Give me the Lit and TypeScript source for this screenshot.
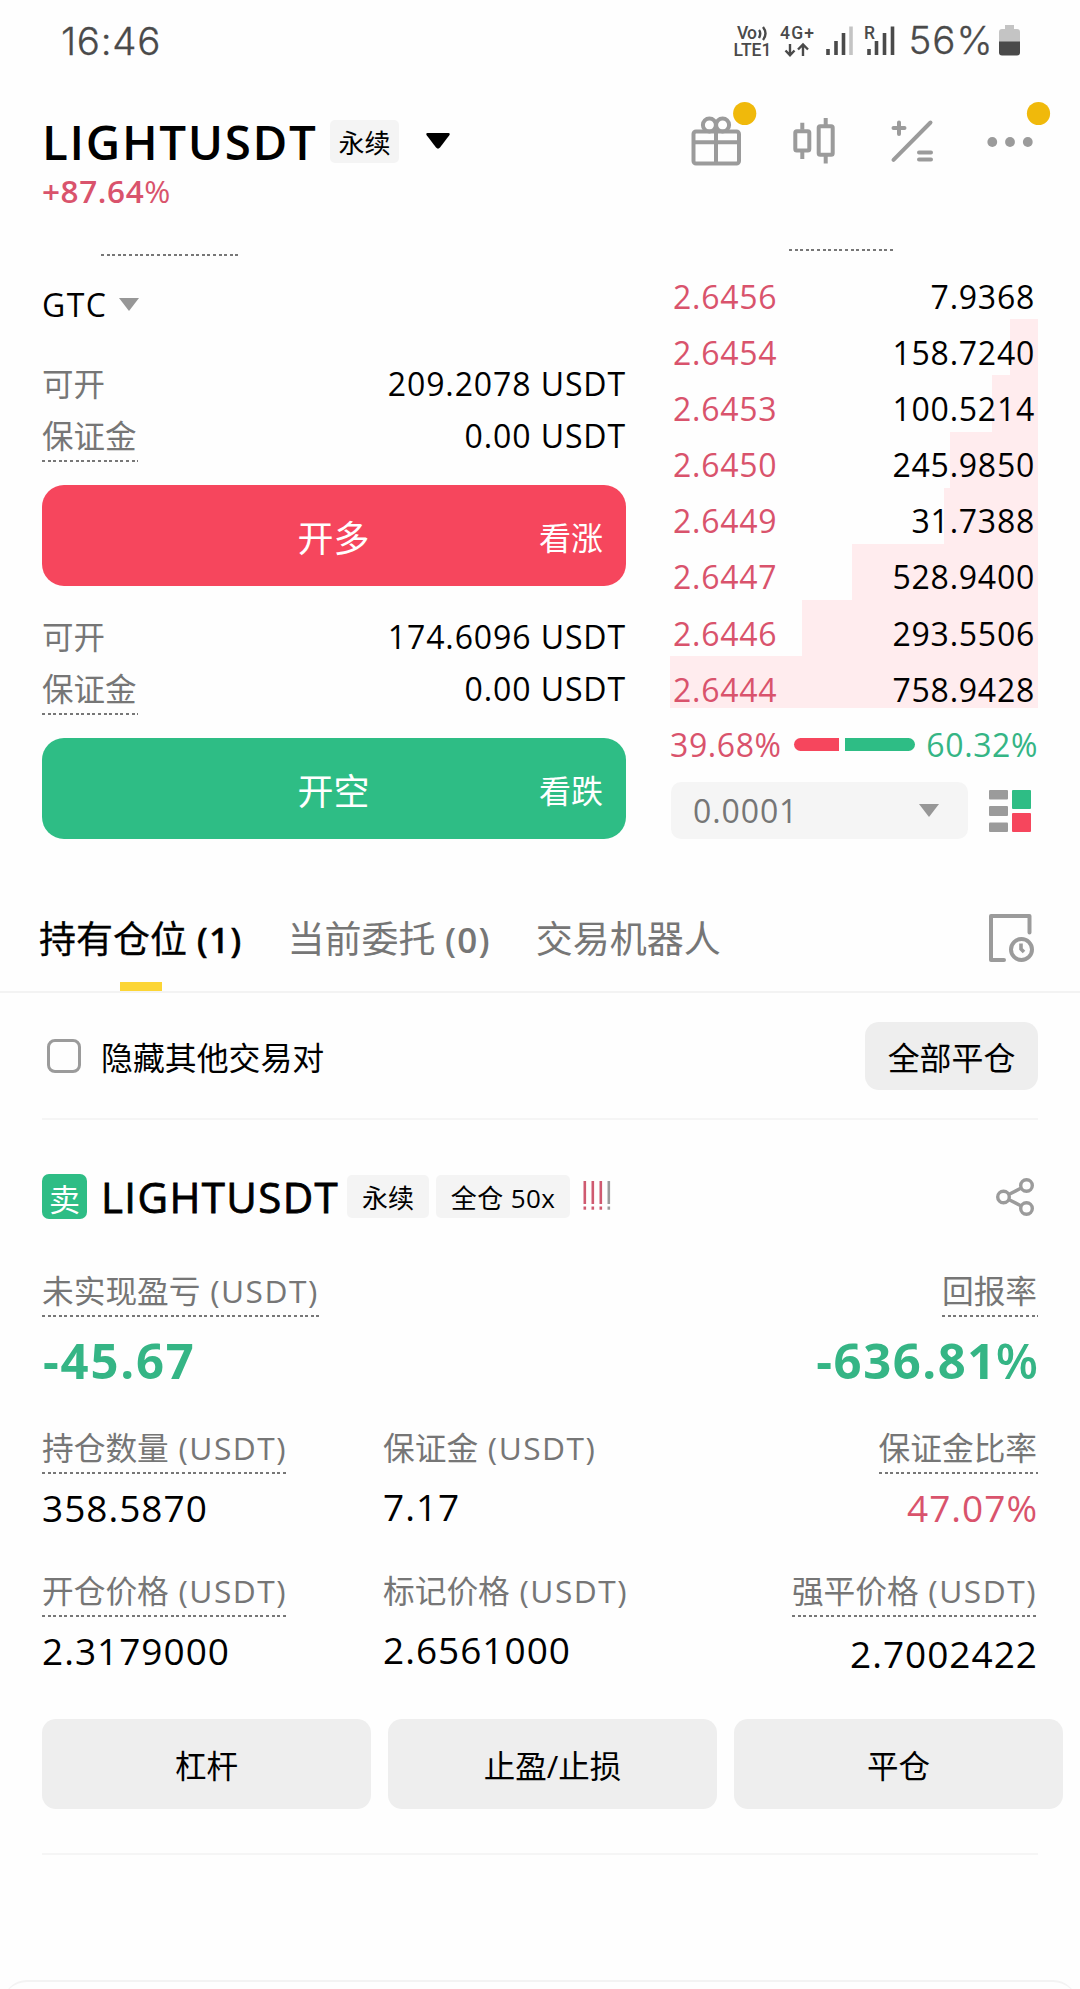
import { LitElement, html, css, svg, nothing } from "lit";
import { customElement, property } from "lit/decorators.js";

interface BookRow {
  price: string;
  amount: string;
  depth: number;
}

const BOOK: BookRow[] = [
  { price: "2.6456", amount: "7.9368", depth: 0 },
  { price: "2.6454", amount: "158.7240", depth: 28 },
  { price: "2.6453", amount: "100.5214", depth: 46 },
  { price: "2.6450", amount: "245.9850", depth: 88 },
  { price: "2.6449", amount: "31.7388", depth: 94 },
  { price: "2.6447", amount: "528.9400", depth: 186 },
  { price: "2.6446", amount: "293.5506", depth: 236 },
  { price: "2.6444", amount: "758.9428", depth: 368 },
];

const shared = css`
  * {
    box-sizing: border-box;
  }
  svg {
    display: block;
    overflow: visible;
    flex: none;
  }
  .dash {
    background: repeating-linear-gradient(90deg, #777 0 3px, transparent 3px 5.6px) left bottom / 100% 2px no-repeat;
  }
`;

@customElement("status-bar")
class StatusBar extends LitElement {
  static styles = [
    shared,
    css`
      :host {
        display: flex;
        align-items: center;
        justify-content: space-between;
        height: 82px;
        padding: 0 60px 0 61px;
        color: #4a4a4a;
        font: 300 38.5px/50px "Inter", sans-serif;
      }
      .time {
        letter-spacing: 0.7px;
        -webkit-text-stroke: 0.3px #4a4a4a;
      }
      .small {
        font: 500 17.5px "Roboto", sans-serif;
        fill: #4a4a4a;
      }
      .big {
        font: 300 38.5px "Inter", sans-serif;
        fill: #4a4a4a;
        stroke: #4a4a4a;
        stroke-width: 0.3px;
      }
    `,
  ];

  render() {
    return html`
      <span class="time">16:46</span>
      <svg width="287" height="34" viewBox="733 25 287 34" fill="none">
        <text class="small" x="737" y="40" textLength="20">Vo</text>
        <path d="M759 31q2.500 3 0 8M763 28q5 6.500 0 13" stroke="#4a4a4a" stroke-width="2.400" />
        <text class="small" x="733.500" y="57" textLength="38">LTE1</text>
        <text class="small" x="780" y="40" textLength="34">4G+</text>
        <path d="M790 45v11M785.500 51.500l4.500 4.800 4.500-4.800M803 57V46M798 50.500l5-5 5 5" stroke="#4a4a4a" stroke-width="2.400" />
        <path d="M828 50v6M836 42v14M843.500 34v22" stroke="#4a4a4a" stroke-width="3.600" />
        <path d="M851 27.500v28.500" stroke="#c4c4c4" stroke-width="3.600" />
        <text class="small" x="864" y="40">R</text>
        <path d="M869 50v6M876.500 42v14M884.500 34v22M892.500 27.500v28.500" stroke="#4a4a4a" stroke-width="3.600" />
        <text class="big" x="908.500" y="55" textLength="84">56%</text>
        <path d="M1005 26h9v4h3q3 0 3 3v10h-21V33q0-3 3-3h3z" fill="#c4c4c4" />
        <path d="M999 42.500h21V53.500q0 3-3 3h-15q-3 0-3-3z" fill="#4a4a4a" />
      </svg>
    `;
  }
}

@customElement("pair-header")
class PairHeader extends LitElement {
  static styles = [
    shared,
    css`
      :host {
        display: block;
        padding: 17px 42px 0 42px;
      }
      .row {
        display: flex;
        align-items: center;
        height: 84px;
      }
      .name {
        width: 288px;
        color: #000;
        font-size: 47.5px;
        font-weight: 600;
        line-height: 83px;
        letter-spacing: 1.7px;
        white-space: nowrap;
      }
      .tag {
        width: 69px;
        height: 43px;
        border-radius: 5px;
        background: #f4f4f4;
        color: #000;
        font-size: 26px;
        line-height: 46px;
        text-align: center;
      }
      .caret {
        margin-left: 27px;
      }
      .icons {
        margin-left: auto;
        margin-right: 5px;
      }
      .change {
        color: #d9536c;
        font-size: 31.5px;
        font-weight: 600;
        line-height: 16px;
        height: 17px;
        letter-spacing: 0.6px;
      }
      .pct {
        font-weight: 400;
      }
    `,
  ];

  render() {
    return html`
      <div class="row">
        <span class="name">LIGHTUSDT</span>
        <span class="tag">永续</span>
        <svg class="caret" width="24" height="16" viewBox="0 0 24 16">
          <path d="M1.500 0h21q2 .5.800 2.200L14 14.500q-2 2.300-4 0L.700 2.200Q-.500.500 1.500 0z" fill="#000" />
        </svg>
        <svg class="icons" width="342" height="50" viewBox="691 116 342 50" fill="none" stroke="#9b9b9b" stroke-width="4">
          <rect x="693.500" y="131.500" width="45.500" height="32" rx="2.500" />
          <path d="M693.500 142.300h45.500M716 124v39.500" />
          <circle cx="709.400" cy="125" r="6.500" />
          <circle cx="722.600" cy="125" r="6.500" />
          <rect x="795.300" y="131.200" width="14" height="19.200" rx="1.500" />
          <rect x="818.700" y="126.300" width="14" height="28.400" rx="1.500" />
          <path d="M802.300 122.800v7M802.300 152v7M825.700 118v7M825.700 156v7.500" />
          <g stroke-linecap="round">
            <path d="M893.500 159.800L930.500 122.500M893.500 128h11M899 122.500v11.500M919 152.500h12M919 159.500h12" />
          </g>
          <g stroke="none" fill="#9b9b9b">
            <circle cx="992.300" cy="142" r="4.900" />
            <circle cx="1010" cy="142" r="4.900" />
            <circle cx="1027.800" cy="142" r="4.900" />
          </g>
          <g stroke="none" fill="#f0b90b">
            <circle cx="744.700" cy="113.500" r="11.600" />
            <circle cx="1038.500" cy="113.500" r="11.600" />
          </g>
        </svg>
      </div>
      <div class="change">+87.64<span class="pct">%</span></div>
    `;
  }
}

@customElement("order-side")
class OrderSide extends LitElement {
  @property() max = "";
  @property() action = "";
  @property() hint = "";
  @property() tone = "red";

  static styles = [
    shared,
    css`
      :host {
        display: block;
      }
      .row {
        display: flex;
        justify-content: space-between;
        height: 63px;
        line-height: 61px;
        font-size: 31.5px;
        color: #000;
      }
      .row.margin {
        height: 46px;
        line-height: 40px;
      }
      .label {
        color: #767676;
        padding: 0 1px 0 0;
      }
      .value {
        font-size: 32px;
        letter-spacing: 0.9px;
      }
      .button {
        display: grid;
        grid-template-columns: 1fr auto 1fr;
        align-items: center;
        width: 584px;
        height: 101px;
        margin-top: 23px;
        padding: 1px 23px 0 22px;
        border-radius: 22px;
        color: #fff;
        font-size: 36px;
      }
      .red {
        background: #f6465d;
      }
      .green {
        background: #2ebd85;
      }
      .hint {
        grid-column: 3;
        justify-self: end;
        font-size: 32px;
      }
      .action {
        grid-column: 2;
      }
    `,
  ];

  render() {
    return html`
      <div class="row"><span class="label">可开</span><span class="value">${this.max} USDT</span></div>
      <div class="row margin"><span class="label dash">保证金</span><span class="value">0.00 USDT</span></div>
      <div class="button ${this.tone}">
        <span class="action">${this.action}</span><span class="hint">${this.hint}</span>
      </div>
    `;
  }
}

@customElement("order-book")
class OrderBook extends LitElement {
  static styles = [
    shared,
    css`
      :host {
        display: block;
        padding-top: 49px;
      }
      .rule {
        width: 105px;
        height: 2px;
        margin-left: 119px;
      }
      .rows {
        height: 445px;
        margin-top: 12px;
      }
      .row {
        display: flex;
        justify-content: space-between;
        height: 56.2px;
        padding: 11.5px 3px 0 3px;
        line-height: 43px;
        font-size: 32px;
        letter-spacing: 0.75px;
        background: linear-gradient(#ffecee, #ffecee) right top / var(--depth) 100% no-repeat;
        color: #000;
      }
      .row:last-child {
        height: 51.6px;
        line-height: 39px;
        padding-top: 13.5px;
      }
      .price {
        color: #d9536c;
      }
      .ratio {
        display: flex;
        align-items: center;
        height: 72px;
        margin-bottom: 2px;
        font-size: 32px;
        letter-spacing: 0.6px;
      }
      .buy {
        width: 124px;
        color: #d9536c;
      }
      .sell {
        margin-left: auto;
        color: #35b585;
      }
      .bar {
        height: 13px;
      }
      .bar.left {
        width: 45px;
        margin-right: 6px;
        border-radius: 7px 0 0 7px;
        background: #f6465d;
      }
      .bar.right {
        width: 70px;
        border-radius: 0 7px 7px 0;
        background: #2ebd85;
      }
      .controls {
        display: flex;
        align-items: center;
        padding-left: 1px;
      }
      .select {
        display: flex;
        align-items: center;
        justify-content: space-between;
        width: 297px;
        height: 57px;
        padding: 0 29px 0 22px;
        border-radius: 10px;
        background: #f5f5f5;
        color: #767676;
        font-size: 32px;
        letter-spacing: 0.9px;
      }
      .view {
        margin-left: 21px;
      }
    `,
  ];

  render() {
    return html`
      <div class="rule dash"></div>
      <div class="rows">
        ${BOOK.map(
          (r) => html`<div class="row" style="--depth:${r.depth}px">
            <span class="price">${r.price}</span><span>${r.amount}</span>
          </div>`,
        )}
      </div>
      <div class="ratio">
        <span class="buy">39.68%</span>
        <span class="bar left"></span><span class="bar right"></span>
        <span class="sell">60.32%</span>
      </div>
      <div class="controls">
        <div class="select">
          <span>0.0001</span>
          <svg width="20" height="13" viewBox="0 0 20 13"><path d="M0 0h20L10 13z" fill="#979797" /></svg>
        </div>
        <svg class="view" width="42" height="42" viewBox="0 0 42 42">
          <g fill="#9b9b9b">
            <rect width="19" height="9.500" rx="1" />
            <rect y="16" width="19" height="10" rx="1" />
            <rect y="32.500" width="19" height="9.500" rx="1" />
          </g>
          <rect x="23" width="19" height="19" rx="1" fill="#2ebd85" />
          <rect x="23" y="23" width="19" height="19" rx="1" fill="#f6465d" />
        </svg>
      </div>
    `;
  }
}

@customElement("metric-cell")
class MetricCell extends LitElement {
  @property() label = "";
  @property() unit = "";
  @property() value = "";
  @property() percent = "";
  @property() kind = "";

  static styles = [
    shared,
    css`
      :host {
        display: flex;
        flex-direction: column;
        align-items: flex-start;
      }
      :host([end]) {
        align-items: flex-end;
      }
      .label {
        height: 44px;
        padding: 0 1px 0 0;
        color: #767676;
        font-size: 31.7px;
        line-height: 36px;
        white-space: nowrap;
      }
      .unit {
        letter-spacing: 1.5px;
      }
      .value {
        height: 70px;
        color: #000;
        font-size: 37px;
        line-height: 68px;
        letter-spacing: 1px;
      }
      .raised {
        line-height: 65px;
      }
      .lowered {
        line-height: 74px;
      }
      .red {
        color: #d9536c;
      }
      .large {
        height: 88px;
        color: #35b585;
        font-size: 49px;
        font-weight: 700;
        line-height: 86px;
        letter-spacing: 1.5px;
      }
      .large.spaced {
        padding-left: 1px;
        letter-spacing: 1.8px;
      }
      .large .pct {
        font-weight: 600;
        margin-left: -1px;
        letter-spacing: 0;
      }
    `,
  ];

  render() {
    const dashed = !this.kind.includes("raised");
    return html`
      <span class="label ${dashed ? "dash" : ""}"
        >${this.label}${this.unit ? html`<span class="unit"> (${this.unit})</span>` : nothing}</span
      >
      <span class="value ${this.kind}"
        >${this.value}${this.percent ? html`<span class="pct">${this.percent}</span>` : nothing}</span
      >
    `;
  }
}

@customElement("position-card")
class PositionCard extends LitElement {
  static styles = [
    shared,
    css`
      :host {
        display: block;
        padding: 0 42px;
      }
      .head {
        display: flex;
        align-items: center;
        height: 153px;
      }
      .side {
        width: 45px;
        height: 45px;
        border-radius: 7px;
        background: #2ebd85;
        color: #fff;
        font-size: 31px;
        line-height: 51px;
        text-align: center;
      }
      .name {
        width: 260px;
        padding-left: 14px;
        color: #000;
        font-size: 42px;
        font-weight: 400;
        letter-spacing: 1.4px;
        -webkit-text-stroke: 0.8px #000;
        white-space: nowrap;
      }
      .tag {
        width: 82px;
        height: 43px;
        margin-right: 7px;
        border-radius: 5px;
        background: #f4f4f4;
        color: #000;
        font-size: 26px;
        line-height: 46px;
        text-align: center;
      }
      .tag.wide {
        width: 134px;
        margin-right: 13px;
        letter-spacing: 0.4px;
      }
      .share {
        margin-left: auto;
        margin-right: 4px;
      }
      .pair {
        display: flex;
        justify-content: space-between;
      }
      .grid {
        display: grid;
        grid-template-columns: 341px 1fr auto;
        margin-top: 25px;
        row-gap: 29px;
      }
      .actions {
        display: grid;
        grid-template-columns: repeat(3, 329px);
        gap: 17px;
        margin-top: 32px;
      }
      .action {
        height: 90px;
        border-radius: 14px;
        background: #eee;
        color: #000;
        font-size: 31.5px;
        line-height: 93px;
        text-align: center;
      }
      .divider {
        height: 2px;
        margin-top: 44px;
        background: #f5f5f5;
      }
    `,
  ];

  render() {
    const marks = [0, 8, 16, 24];
    return html`
      <div class="head">
        <span class="side">卖</span>
        <span class="name">LIGHTUSDT</span>
        <span class="tag">永续</span>
        <span class="tag wide">全仓 50x</span>
        <svg width="28" height="30" viewBox="0 0 28 30">
          ${marks.map(
            (x, i) => svg`<g fill=${i < 3 ? "#cf5a70" : "#9b9b9b"}><rect x=${x + 0.5} y="-1" width="2.600" height="23" /><rect x=${x + 0.5} y="24.500" width="2.600" height="3.200" /></g>`,
          )}
        </svg>
        <svg class="share" width="38" height="38" viewBox="0 0 38 38" fill="none" stroke="#9b9b9b" stroke-width="3.400">
          <circle cx="7.500" cy="19" r="5.800" />
          <circle cx="30.500" cy="7.500" r="5.800" />
          <circle cx="30.500" cy="30.500" r="5.800" />
          <path d="M12.700 16.400L25.300 10.100M12.700 21.600L25.300 27.900" />
        </svg>
      </div>
      <div class="pair">
        <metric-cell label="未实现盈亏" unit="USDT" value="-45.67" kind="large spaced"></metric-cell>
        <metric-cell end label="回报率" value="-636.81" percent="%" kind="large"></metric-cell>
      </div>
      <div class="grid">
        <metric-cell label="持仓数量" unit="USDT" value="358.5870"></metric-cell>
        <metric-cell label="保证金" unit="USDT" value="7.17" kind="raised"></metric-cell>
        <metric-cell end label="保证金比率" value="47.07" percent="%" kind="red"></metric-cell>
        <metric-cell label="开仓价格" unit="USDT" value="2.3179000"></metric-cell>
        <metric-cell label="标记价格" unit="USDT" value="2.6561000" kind="raised"></metric-cell>
        <metric-cell end label="强平价格" unit="USDT" value="2.7002422" kind="lowered"></metric-cell>
      </div>
      <div class="actions">
        <div class="action">杠杆</div>
        <div class="action">止盈/止损</div>
        <div class="action">平仓</div>
      </div>
      <div class="divider"></div>
    `;
  }
}

@customElement("app-root")
class AppRoot extends LitElement {
  static styles = [
    shared,
    css`
      :host {
        display: block;
        width: 1080px;
        height: 1989px;
        overflow: hidden;
        background: #fefefe;
        font-family: "Open Sans", "Noto Sans CJK SC", sans-serif;
      }
      .trade {
        display: grid;
        grid-template-columns: 584px 368px;
        gap: 44px;
        padding-left: 42px;
      }
      .form {
        padding-top: 54px;
      }
      .rule {
        width: 138px;
        height: 2px;
        margin-left: 59px;
      }
      .asset {
        display: flex;
        align-items: center;
        gap: 12px;
        height: 97px;
        color: #000;
        font-size: 32px;
        letter-spacing: 1.4px;
      }
      .second {
        margin-top: 20px;
      }
      .tabs {
        display: flex;
        align-items: center;
        height: 105px;
        margin-top: 49px;
        padding: 0 46px 0 39px;
        border-bottom: 2px solid #f3f3f3;
        color: #767676;
        font-size: 37px;
        line-height: 101px;
      }
      .tab {
        position: relative;
        height: 103px;
        margin-right: 45px;
        white-space: nowrap;
      }
      .num {
        font-weight: 600;
        font-size: 35px;
        letter-spacing: 1.2px;
      }
      .tab.active {
        color: #000;
        -webkit-text-stroke: 0.3px #000;
      }
      .tab.active::after {
        content: "";
        position: absolute;
        left: 81px;
        bottom: 0;
        width: 42px;
        height: 9px;
        background: #fcd535;
      }
      .history {
        margin-left: auto;
        margin-bottom: 3px;
      }
      .filter {
        display: flex;
        align-items: center;
        height: 127px;
        margin: 0 42px;
        border-bottom: 2px solid #f5f5f5;
        color: #000;
        font-size: 31.9px;
      }
      .box {
        width: 34px;
        height: 34px;
        margin: 0 20px 0 5px;
        border: 3px solid #9b9b9b;
        border-radius: 8px;
      }
      .closeall {
        width: 173px;
        height: 68px;
        margin-left: auto;
        border-radius: 14px;
        background: #eee;
        line-height: 71px;
        text-align: center;
      }
      .sheet {
        height: 40px;
        margin: 125px 3px 0;
        border-top: 2px solid #f3f3f3;
        border-radius: 24px 24px 0 0;
      }
    `,
  ];

  render() {
    return html`
      <status-bar></status-bar>
      <pair-header></pair-header>
      <div class="trade">
        <div class="form">
          <div class="rule dash"></div>
          <div class="asset">
            <span>GTC</span>
            <svg width="20" height="13" viewBox="0 0 20 13"><path d="M0 0h20L10 13z" fill="#979797" /></svg>
          </div>
          <order-side max="209.2078" action="开多" hint="看涨" tone="red"></order-side>
          <order-side class="second" max="174.6096" action="开空" hint="看跌" tone="green"></order-side>
        </div>
        <order-book></order-book>
      </div>
      <div class="tabs">
        <span class="tab active">持有仓位 <span class="num">(1)</span></span>
        <span class="tab">当前委托 <span class="num">(0)</span></span>
        <span class="tab">交易机器人</span>
        <svg class="history" width="45" height="48" viewBox="0 0 45 48" fill="none" stroke="#9b9b9b" stroke-width="4">
          <path d="M15 46H2V2h38.500v16.500" stroke-linejoin="round" stroke-linecap="round" />
          <circle cx="32.500" cy="35.500" r="10.500" />
          <path d="M32 29.500v5.500l3 3" stroke-width="3.600" />
        </svg>
      </div>
      <div class="filter">
        <span class="box"></span><span>隐藏其他交易对</span><span class="closeall">全部平仓</span>
      </div>
      <position-card></position-card>
      <div class="sheet"></div>
    `;
  }
}
